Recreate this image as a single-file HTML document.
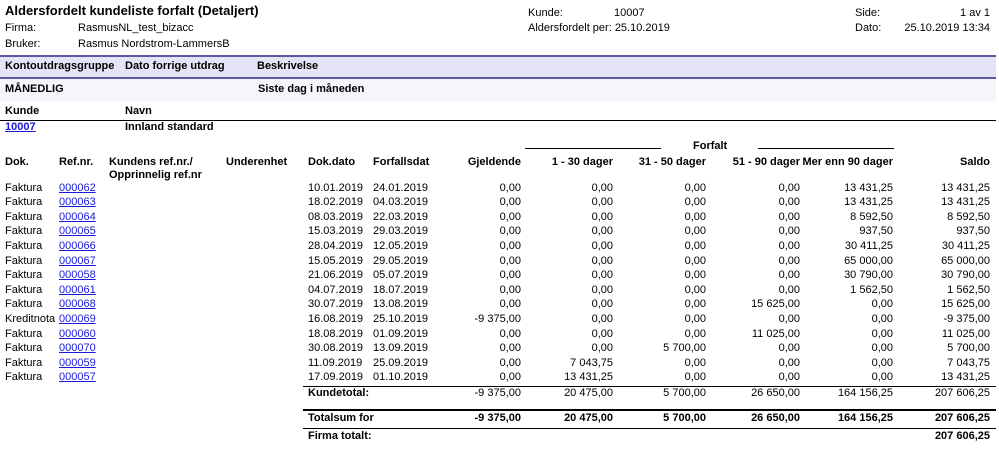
<!DOCTYPE html>
<html><head><meta charset="utf-8"><style>
body{margin:0;width:999px;height:454px;background:#fff;position:relative;overflow:hidden;font-family:"Liberation Sans",Arial,sans-serif;font-size:11px;color:#000}
.a{position:absolute;white-space:nowrap;line-height:13px}
.b{font-weight:bold}
.r{text-align:right}
a{color:#1a1adb;text-decoration:underline}
.ln{position:absolute;height:1px;background:#000}
.w{position:absolute;left:0;width:999px;height:14px}
.w span{position:absolute;top:0;white-space:nowrap;line-height:13px}
.c1{left:5px}.c2{left:59px}.c3{left:308px}.c4{left:373px}
.c5,.c6,.c7,.c8,.c9,.c10{width:100px;text-align:right}
.c5{left:421px}.c6{left:513px}.c7{left:606px}.c8{left:700px}.c9{left:793px}.c10{left:890px}
</style></head><body>
<div class="a b" style="left:5px;top:3px;font-size:13px;line-height:16px">Aldersfordelt kundeliste forfalt (Detaljert)</div>
<div class="a" style="left:5px;top:22px">Firma:</div>
<div class="a" style="left:78px;top:22px">RasmusNL_test_bizacc</div>
<div class="a" style="left:5px;top:38px">Bruker:</div>
<div class="a" style="left:78px;top:38px">Rasmus Nordstrom-LammersB</div>
<div class="a" style="left:528px;top:7px">Kunde:</div>
<div class="a" style="left:614px;top:7px">10007</div>
<div class="a" style="left:528px;top:22px">Aldersfordelt per: 25.10.2019</div>
<div class="a" style="left:855px;top:7px">Side:</div>
<div class="a r" style="left:890px;width:100px;top:7px">1 av 1</div>
<div class="a" style="left:855px;top:22px">Dato:</div>
<div class="a r" style="left:890px;width:100px;top:22px">25.10.2019 13:34</div>

<div style="position:absolute;left:0;top:55px;width:996px;height:2px;background:#5a5aa0"></div>
<div style="position:absolute;left:0;top:57px;width:996px;height:20px;background:#e4e4f6"></div>
<div style="position:absolute;left:0;top:77px;width:996px;height:2px;background:#5a5aa0"></div>
<div style="position:absolute;left:0;top:79px;width:996px;height:22px;background:#f5f5fc"></div>
<div class="a b" style="left:5px;top:60px">Kontoutdragsgruppe</div>
<div class="a b" style="left:125px;top:60px">Dato forrige utdrag</div>
<div class="a b" style="left:257px;top:60px">Beskrivelse</div>
<div class="a b" style="left:5px;top:83px">MÅNEDLIG</div>
<div class="a b" style="left:258px;top:83px">Siste dag i måneden</div>

<div class="a b" style="left:5px;top:105px">Kunde</div>
<div class="a b" style="left:125px;top:105px">Navn</div>
<div class="ln" style="left:0;top:120px;width:996px"></div>
<div class="a b" style="left:5px;top:121px"><a>10007</a></div>
<div class="a b" style="left:125px;top:121px">Innland standard</div>

<div class="ln" style="left:525px;top:148px;width:136px"></div>
<div class="ln" style="left:758px;top:148px;width:136px"></div>
<div class="a b" style="left:693px;top:140px">Forfalt</div>
<div class="a b" style="left:5px;top:156px">Dok.</div>
<div class="a b" style="left:59px;top:156px">Ref.nr.</div>
<div class="a b" style="left:109px;top:156px">Kundens ref.nr./<br>Opprinnelig ref.nr</div>
<div class="a b" style="left:226px;top:156px">Underenhet</div>
<div class="a b" style="left:308px;top:156px">Dok.dato</div>
<div class="a b" style="left:373px;top:156px">Forfallsdat</div>
<div class="a b r" style="left:421px;width:100px;top:156px">Gjeldende</div>
<div class="a b r" style="left:513px;width:100px;top:156px">1 - 30 dager</div>
<div class="a b r" style="left:606px;width:100px;top:156px">31 - 50 dager</div>
<div class="a b r" style="left:700px;width:100px;top:156px">51 - 90 dager</div>
<div class="a b r" style="left:793px;width:100px;top:156px">Mer enn 90 dager</div>
<div class="a b r" style="left:890px;width:100px;top:156px">Saldo</div>

<div class="w" style="top:181.5px"><span class="c1">Faktura</span><span class="c2"><a>000062</a></span><span class="c3">10.01.2019</span><span class="c4">24.01.2019</span><span class="c5">0,00</span><span class="c6">0,00</span><span class="c7">0,00</span><span class="c8">0,00</span><span class="c9">13 431,25</span><span class="c10">13 431,25</span></div>
<div class="w" style="top:196.1px"><span class="c1">Faktura</span><span class="c2"><a>000063</a></span><span class="c3">18.02.2019</span><span class="c4">04.03.2019</span><span class="c5">0,00</span><span class="c6">0,00</span><span class="c7">0,00</span><span class="c8">0,00</span><span class="c9">13 431,25</span><span class="c10">13 431,25</span></div>
<div class="w" style="top:210.7px"><span class="c1">Faktura</span><span class="c2"><a>000064</a></span><span class="c3">08.03.2019</span><span class="c4">22.03.2019</span><span class="c5">0,00</span><span class="c6">0,00</span><span class="c7">0,00</span><span class="c8">0,00</span><span class="c9">8 592,50</span><span class="c10">8 592,50</span></div>
<div class="w" style="top:225.3px"><span class="c1">Faktura</span><span class="c2"><a>000065</a></span><span class="c3">15.03.2019</span><span class="c4">29.03.2019</span><span class="c5">0,00</span><span class="c6">0,00</span><span class="c7">0,00</span><span class="c8">0,00</span><span class="c9">937,50</span><span class="c10">937,50</span></div>
<div class="w" style="top:239.9px"><span class="c1">Faktura</span><span class="c2"><a>000066</a></span><span class="c3">28.04.2019</span><span class="c4">12.05.2019</span><span class="c5">0,00</span><span class="c6">0,00</span><span class="c7">0,00</span><span class="c8">0,00</span><span class="c9">30 411,25</span><span class="c10">30 411,25</span></div>
<div class="w" style="top:254.5px"><span class="c1">Faktura</span><span class="c2"><a>000067</a></span><span class="c3">15.05.2019</span><span class="c4">29.05.2019</span><span class="c5">0,00</span><span class="c6">0,00</span><span class="c7">0,00</span><span class="c8">0,00</span><span class="c9">65 000,00</span><span class="c10">65 000,00</span></div>
<div class="w" style="top:269.1px"><span class="c1">Faktura</span><span class="c2"><a>000058</a></span><span class="c3">21.06.2019</span><span class="c4">05.07.2019</span><span class="c5">0,00</span><span class="c6">0,00</span><span class="c7">0,00</span><span class="c8">0,00</span><span class="c9">30 790,00</span><span class="c10">30 790,00</span></div>
<div class="w" style="top:283.7px"><span class="c1">Faktura</span><span class="c2"><a>000061</a></span><span class="c3">04.07.2019</span><span class="c4">18.07.2019</span><span class="c5">0,00</span><span class="c6">0,00</span><span class="c7">0,00</span><span class="c8">0,00</span><span class="c9">1 562,50</span><span class="c10">1 562,50</span></div>
<div class="w" style="top:298.3px"><span class="c1">Faktura</span><span class="c2"><a>000068</a></span><span class="c3">30.07.2019</span><span class="c4">13.08.2019</span><span class="c5">0,00</span><span class="c6">0,00</span><span class="c7">0,00</span><span class="c8">15 625,00</span><span class="c9">0,00</span><span class="c10">15 625,00</span></div>
<div class="w" style="top:312.9px"><span class="c1">Kreditnota</span><span class="c2"><a>000069</a></span><span class="c3">16.08.2019</span><span class="c4">25.10.2019</span><span class="c5">-9 375,00</span><span class="c6">0,00</span><span class="c7">0,00</span><span class="c8">0,00</span><span class="c9">0,00</span><span class="c10">-9 375,00</span></div>
<div class="w" style="top:327.5px"><span class="c1">Faktura</span><span class="c2"><a>000060</a></span><span class="c3">18.08.2019</span><span class="c4">01.09.2019</span><span class="c5">0,00</span><span class="c6">0,00</span><span class="c7">0,00</span><span class="c8">11 025,00</span><span class="c9">0,00</span><span class="c10">11 025,00</span></div>
<div class="w" style="top:342.1px"><span class="c1">Faktura</span><span class="c2"><a>000070</a></span><span class="c3">30.08.2019</span><span class="c4">13.09.2019</span><span class="c5">0,00</span><span class="c6">0,00</span><span class="c7">5 700,00</span><span class="c8">0,00</span><span class="c9">0,00</span><span class="c10">5 700,00</span></div>
<div class="w" style="top:356.7px"><span class="c1">Faktura</span><span class="c2"><a>000059</a></span><span class="c3">11.09.2019</span><span class="c4">25.09.2019</span><span class="c5">0,00</span><span class="c6">7 043,75</span><span class="c7">0,00</span><span class="c8">0,00</span><span class="c9">0,00</span><span class="c10">7 043,75</span></div>
<div class="w" style="top:371.3px"><span class="c1">Faktura</span><span class="c2"><a>000057</a></span><span class="c3">17.09.2019</span><span class="c4">01.10.2019</span><span class="c5">0,00</span><span class="c6">13 431,25</span><span class="c7">0,00</span><span class="c8">0,00</span><span class="c9">0,00</span><span class="c10">13 431,25</span></div>

<div class="ln" style="left:303px;top:386px;width:693px"></div>
<div class="w" style="top:387px"><span class="c3 b">Kundetotal:</span><span class="c5">-9 375,00</span><span class="c6">20 475,00</span><span class="c7">5 700,00</span><span class="c8">26 650,00</span><span class="c9">164 156,25</span><span class="c10">207 606,25</span></div>
<div class="ln" style="left:303px;top:409px;width:693px;height:2px"></div>
<div class="w b" style="top:412px"><span class="c3">Totalsum for</span><span class="c5">-9 375,00</span><span class="c6">20 475,00</span><span class="c7">5 700,00</span><span class="c8">26 650,00</span><span class="c9">164 156,25</span><span class="c10">207 606,25</span></div>
<div class="ln" style="left:303px;top:428px;width:693px"></div>
<div class="w b" style="top:430px"><span class="c3">Firma totalt:</span><span class="c10">207 606,25</span></div>
</body></html>
